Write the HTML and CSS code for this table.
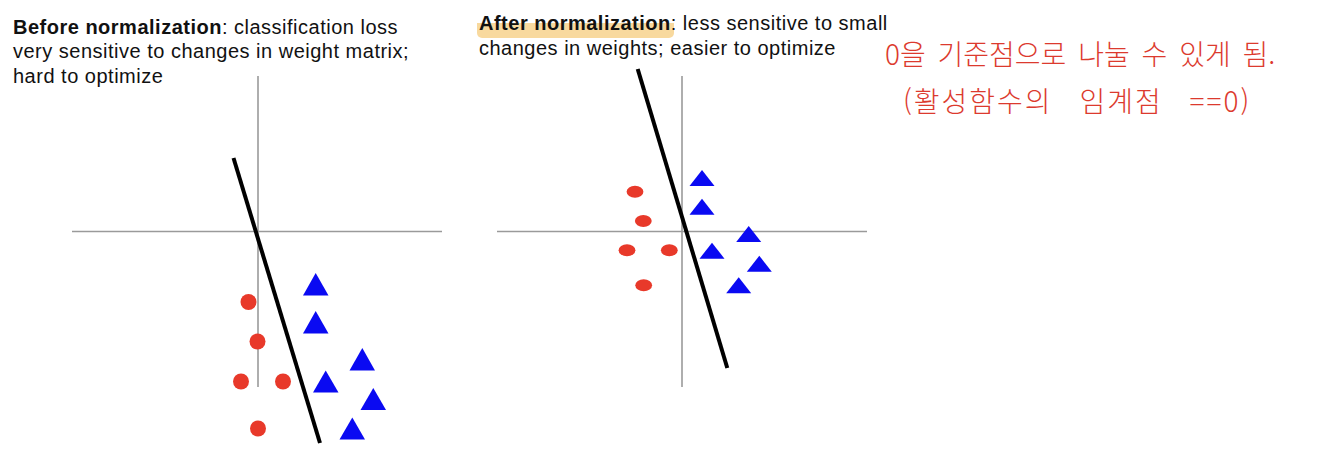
FILE: index.html
```html
<!DOCTYPE html>
<html lang="ko">
<head>
<meta charset="utf-8">
<title>Normalization</title>
<link rel="stylesheet" href="styles.css">
</head>
<body>
<main class="page">
  <section class="panel panel-before">
    <svg class="plot" width="470" height="456" viewBox="0 0 470 456">
      <line class="axis" x1="258" y1="76" x2="258" y2="387"/>
      <line class="axis" x1="72" y1="231.5" x2="442" y2="231.5"/>
      <line class="boundary" x1="233.5" y1="158" x2="320" y2="443"/>
      <g class="dots">
        <circle cx="248.5" cy="302" r="8"/>
        <circle cx="257.5" cy="341.5" r="8"/>
        <circle cx="241" cy="381.5" r="8"/>
        <circle cx="283" cy="381.5" r="8"/>
        <circle cx="258" cy="428.5" r="8"/>
      </g>
      <g class="tris">
        <polygon points="315.7,273 303,295.5 328.5,295.5"/>
        <polygon points="315.7,311 303,333.5 328.5,333.5"/>
        <polygon points="362.3,348 349.5,370.5 375,370.5"/>
        <polygon points="325.7,370.5 313,392.5 338.5,392.5"/>
        <polygon points="373.3,388 360.5,410 386,410"/>
        <polygon points="352.3,417.5 339.5,439.5 365,439.5"/>
      </g>
    </svg>
    <p class="caption caption-before"><b>Before normalization</b>: classification loss<br>very sensitive to changes in weight matrix;<br>hard to optimize</p>
  </section>
  <section class="panel panel-after">
    <svg class="plot" width="410" height="456" viewBox="470 0 410 456">
      <line class="axis" x1="682" y1="76" x2="682" y2="387"/>
      <line class="axis" x1="497" y1="231.5" x2="867" y2="231.5"/>
      <line class="boundary" x1="637.7" y1="69" x2="727.3" y2="368"/>
      <g class="dots">
        <ellipse cx="635" cy="191.7" rx="8.4" ry="6"/>
        <ellipse cx="643.3" cy="221" rx="8.4" ry="6"/>
        <ellipse cx="627" cy="250.3" rx="8.4" ry="6"/>
        <ellipse cx="669.3" cy="250.3" rx="8.4" ry="6"/>
        <ellipse cx="643.7" cy="285.3" rx="8.4" ry="6"/>
      </g>
      <g class="tris">
        <polygon points="702,170 689.5,186 714.5,186"/>
        <polygon points="702,198.7 689.5,214.7 714.5,214.7"/>
        <polygon points="748.7,226 736.2,242 761.2,242"/>
        <polygon points="712,242.7 699.5,258.7 724.5,258.7"/>
        <polygon points="759.3,255.7 746.8,271.7 771.8,271.7"/>
        <polygon points="738.7,277.3 726.2,293.3 751.2,293.3"/>
      </g>
    </svg>
    <p class="caption caption-after"><b class="hl">After normalization</b>: less sensitive to small<br>changes in weights; easier to optimize</p>
  </section>
  <aside class="note">
    <p class="note-line note-line-1">0을 기준점으로 나눌 수 있게 됨.</p>
    <p class="note-line note-line-2">(활성함수의 임계점 ==0)</p>
  </aside>
</main>
</body>
</html>
```
FILE: styles.css
```css
html, body {
  margin: 0;
  padding: 0;
  background: #ffffff;
}

.page {
  display: flex;
  width: 1318px;
  height: 456px;
  overflow: hidden;
}

.panel {
  display: grid;
  flex: none;
}

.panel > * {
  grid-area: 1 / 1;
}

.panel-before {
  width: 470px;
}

.panel-after {
  width: 410px;
}

.plot {
  display: block;
}

.axis {
  stroke: #9a9a9a;
  stroke-width: 1.6;
}

.boundary {
  stroke: #000000;
  stroke-width: 4;
}

.dots {
  fill: #e8392a;
}

.tris {
  fill: #0a0af2;
}

.caption {
  margin: 0;
  align-self: start;
  font-family: "Liberation Sans", Arial, sans-serif;
  font-size: 20px;
  letter-spacing: 0.5px;
  color: #111111;
  white-space: nowrap;
}

.caption b {
  font-weight: 700;
}

.caption-before {
  padding: 14.8px 0 0 13px;
  line-height: 24.5px;
}

.caption-after {
  padding: 10.6px 0 0 9px;
  line-height: 25px;
}

.hl {
  padding: 0 3px 4px 2px;
  margin: 0 -3px 0 -2px;
  border-radius: 5px;
  background: linear-gradient(to bottom, transparent 42%, #f8d99e 42%, #f8d99e 100%);
}

.note {
  flex: none;
  padding: 30px 0 0 5px;
  font-family: "Noto Sans CJK KR", "Noto Sans", sans-serif;
  font-weight: 300;
  font-size: 28px;
  color: #dc3a2e;
}

.note-line {
  margin: 0;
  line-height: 47px;
  white-space: nowrap;
}

.note-line-1 {
  word-spacing: 4px;
}

.note-line-2 {
  padding-left: 18px;
  letter-spacing: 2px;
  word-spacing: 17px;
}
```
